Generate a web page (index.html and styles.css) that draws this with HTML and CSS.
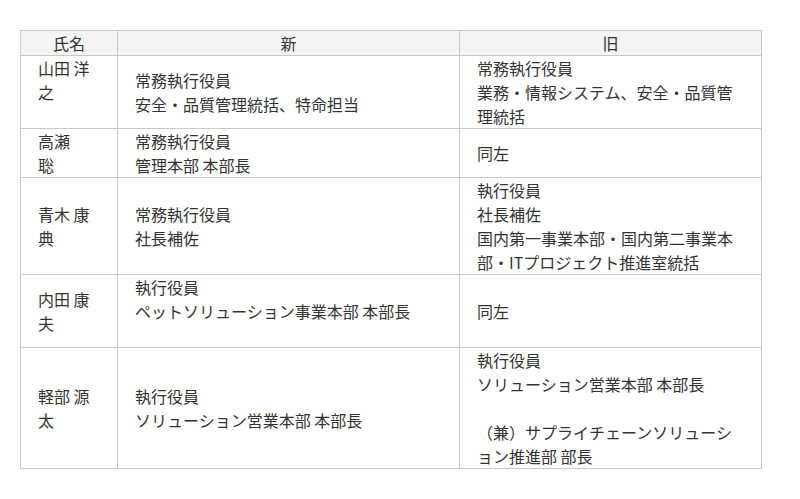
FILE: index.html
```html
<!DOCTYPE html>
<html lang="ja">
<head>
<meta charset="utf-8">
<title>役員人事</title>
<link rel="stylesheet" href="styles.css">
</head>
<body>
<div class="page">
  <table class="exec">
    <thead>
      <tr>
        <th class="c-name">氏名</th>
        <th class="c-new">新</th>
        <th class="c-old">旧</th>
      </tr>
    </thead>
    <tbody>
      <tr>
        <td class="top">山田 洋<br>之</td>
        <td>常務執行役員<br>安全・品質管理統括、特命担当</td>
        <td>常務執行役員<br>業務・情報システム、安全・品質管<br>理統括</td>
      </tr>
      <tr>
        <td>高瀬<br>聡</td>
        <td>常務執行役員<br>管理本部 本部長</td>
        <td>同左</td>
      </tr>
      <tr>
        <td>青木 康<br>典</td>
        <td>常務執行役員<br>社長補佐</td>
        <td>執行役員<br>社長補佐<br>国内第一事業本部・国内第二事業本<br>部・ITプロジェクト推進室統括</td>
      </tr>
      <tr>
        <td>内田 康<br>夫</td>
        <td class="top extra">執行役員<br>ペットソリューション事業本部 本部長</td>
        <td>同左</td>
      </tr>
      <tr>
        <td>軽部 源<br>太</td>
        <td>執行役員<br>ソリューション営業本部 本部長</td>
        <td>執行役員<br>ソリューション営業本部 本部長<br><br>（兼）サプライチェーンソリューシ<br>ョン推進部 部長</td>
      </tr>
    </tbody>
  </table>
</div>
</body>
</html>
```
FILE: styles.css
```css
html, body {
  margin: 0;
  padding: 0;
  background: #ffffff;
}
.page {
  padding: 30px 20px;
  font-family: "Noto Sans CJK JP", "Noto Sans", sans-serif;
  font-size: 16px;
  line-height: 24px;
  color: #333333;
}
.exec {
  width: 742px;
  table-layout: fixed;
  border-collapse: separate;
  border-spacing: 0;
  border-top: 1px solid #c8c8c8;
  border-left: 1px solid #c8c8c8;
}
.exec th,
.exec td {
  box-sizing: border-box;
  padding: 0 17px;
  border-right: 1px solid #c8c8c8;
  border-bottom: 1px solid #c8c8c8;
  vertical-align: middle;
  text-align: left;
  font-weight: normal;
}
.exec th {
  background: #f4f4f4;
  text-align: center;
  height: 25px;
}
.c-name { width: 97px; }
.c-new { width: 342px; }
.c-old { width: 302px; }
.exec td.top {
  vertical-align: top;
}
.exec td.extra {
  padding-bottom: 24px;
}
```
